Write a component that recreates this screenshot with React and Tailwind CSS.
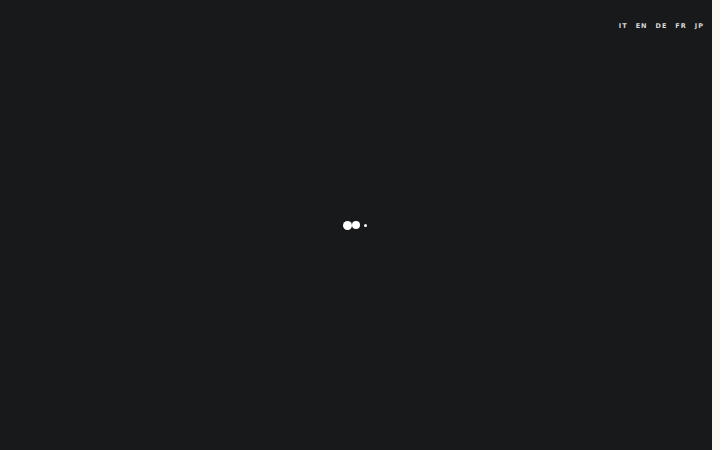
import React from "react";

const langs = ["IT", "EN", "DE", "FR", "JP"];

export default function App() {
  return (
    <div className="flex h-[450px] w-[720px] overflow-hidden">
      <div className="relative flex h-full w-[712px] flex-col bg-[#18191b]">
        {/* Language menu */}
        <div className="flex justify-end pt-[22px] pr-[8px]">
          <ul
            className="flex gap-[8px] text-[6.5px] font-bold tracking-[1px] text-[#d9d9d9]"
            style={{ fontFamily: '"DejaVu Sans", sans-serif' }}
          >
            {langs.map((l) => (
              <li key={l} className="leading-[8px]">
                {l}
              </li>
            ))}
          </ul>
        </div>

        {/* Loader */}
        <div className="flex flex-1 items-center justify-center pb-[30px]">
          <div className="-ml-[2px] flex items-center">
            <span className="h-[9px] w-[9px] rounded-full bg-white" />
            <span className="h-[8px] w-[8px] rounded-full bg-white" />
            <span className="ml-[4px] h-[3px] w-[3px] rounded-full bg-white" />
          </div>
        </div>
      </div>
      <div className="h-full w-[8px] bg-[#fbf8f0]" />
    </div>
  );
}
